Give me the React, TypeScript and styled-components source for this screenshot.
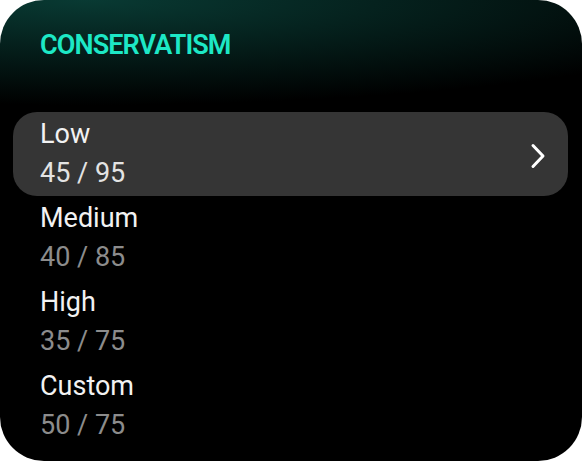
import React from 'react';
import styled, { createGlobalStyle } from 'styled-components';

const GlobalStyle = createGlobalStyle`
  html, body {
    margin: 0;
    padding: 0;
    background: #ffffff;
  }
  body {
    font-family: Roboto, "Liberation Sans", sans-serif;
  }
`;

const Card = styled.div`
  width: 582px;
  height: 461px;
  box-sizing: border-box;
  border-radius: 44px;
  overflow: hidden;
  padding: 0 14px 0 13px;
  background:
    radial-gradient(120% 105px at 15% 0%, rgba(10, 68, 60, 0.85), rgba(0, 0, 0, 0) 100%),
    #000000;
  display: flex;
  flex-direction: column;
`;

const Header = styled.header`
  height: 112px;
  box-sizing: border-box;
  padding: 29px 0 0 27px;
`;

const Title = styled.h1`
  margin: 0;
  font-size: 27px;
  font-weight: 600;
  letter-spacing: -0.9px;
  line-height: 32px;
  color: #1de8c6;
`;

const List = styled.ul`
  list-style: none;
  margin: 0;
  padding: 0;
`;

const Row = styled.li<{ $active?: boolean }>`
  height: 84px;
  box-sizing: border-box;
  padding: 4px 22px 0 27px;
  border-radius: 24px;
  background: ${(p) => (p.$active ? '#353535' : 'transparent')};
  display: flex;
  align-items: center;
  justify-content: space-between;
`;

const Text = styled.div`
  display: flex;
  flex-direction: column;
  align-self: flex-start;
`;

const Label = styled.span`
  font-size: 27px;
  line-height: 37px;
  color: #f2f2f2;
`;

const Value = styled.span<{ $active?: boolean }>`
  margin-top: 2px;
  font-size: 27px;
  line-height: 37px;
  color: ${(p) => (p.$active ? '#e3e3e3' : '#8c8c8c')};
`;

const Chevron = () => (
  <svg width="16" height="26" viewBox="0 0 16 26" fill="none">
    <path d="M3 2.5 L13 13 L3 23.5" stroke="#ffffff" strokeWidth="3" strokeLinecap="round" strokeLinejoin="round" />
  </svg>
);

const levels = [
  { name: 'Low', value: '45 / 95' },
  { name: 'Medium', value: '40 / 85' },
  { name: 'High', value: '35 / 75' },
  { name: 'Custom', value: '50 / 75' },
];

export default function App() {
  return (
    <>
      <GlobalStyle />
      <Card>
        <Header>
          <Title>CONSERVATISM</Title>
        </Header>
        <List>
          {levels.map((l, i) => (
            <Row key={l.name} $active={i === 0}>
              <Text>
                <Label>{l.name}</Label>
                <Value $active={i === 0}>{l.value}</Value>
              </Text>
              {i === 0 && <Chevron />}
            </Row>
          ))}
        </List>
      </Card>
    </>
  );
}
